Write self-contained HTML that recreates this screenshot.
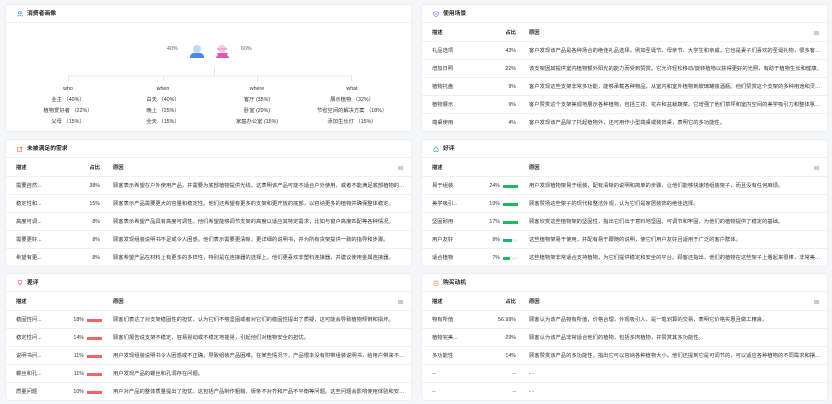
<!DOCTYPE html><html><head><meta charset="utf-8"><style>
*{margin:0;padding:0;box-sizing:border-box}
body{width:832px;height:404px;background:#f5f6f8;font-family:"Liberation Sans","Noto Sans CJK SC",sans-serif;color:#333;position:relative;overflow:hidden}
.p{position:absolute;background:#fff;border:1px solid #eceef2;border-radius:4px;overflow:hidden}
.h{height:18px;border-bottom:1px solid #eef0f3;font-size:5.8px;font-weight:bold;line-height:18px;padding-left:11px;display:flex;align-items:center;gap:4px;color:#222}
.ic{width:6px;height:6px;display:inline-block}
.r{position:absolute;left:0;right:0;height:18px;border-bottom:1px solid #f0f1f4;font-size:5.3px;line-height:18px;white-space:nowrap}
.r span{position:absolute}
.d{left:10px}.pc{right:311px;text-align:right}.rs{left:107px;width:294px;overflow:hidden;text-overflow:ellipsis}
.th{font-weight:bold;color:#222}
.b{position:absolute;left:81px;top:7.5px;width:15px;height:3px;background:#eaf7ef}
.b i{display:block;height:3px}
.g i{background:#1db863}.rd i{background:#f56464}
.tb{position:absolute;right:8px;top:7px;width:5px;height:4px;background:#ccc}
.c{position:absolute;font-size:5.3px;text-align:center;width:100px;line-height:11px}
</style></head><body>
<div class="p" style="left:5px;top:4px;width:407px;height:128px">
<div class="h"><svg class="ic" viewBox="0 0 10 10"><circle cx="4" cy="3" r="2" fill="none" stroke="#3a9bdc"/><path d="M1 9c0-3 6-3 6 0M7 1.5a2 2 0 0 1 0 3.5M8 6c1 .5 1.5 1.5 1.5 3" fill="none" stroke="#3a9bdc"/></svg>消费者画像</div>
<div style="position:absolute;left:161px;top:41px;font-size:5.3px;color:#666">40%</div>
<div style="position:absolute;left:235px;top:41px;font-size:5.3px;color:#666">60%</div>
<svg style="position:absolute;left:0;top:0" width="407" height="128">
<circle cx="191" cy="44" r="4" fill="#c3d6fb"/><path d="M184 53h14v-1a4 4 0 0 0-4-4h-6a4 4 0 0 0-4 4z" fill="#4a86f0"/>
<circle cx="216" cy="44" r="4" fill="#f8c8e7"/><path d="M211 43h10v2h-10z" fill="#f3a9d6"/><path d="M210 53h13v-1l-2-2 1-2h-11l1 2-2 2z" fill="#e058ac"/>
<path d="M208.5 62v9M62.5 76v-5h283v5M157.5 71v5M251.5 71v5" stroke="#e4e6ea" fill="none"/>
</svg>
<div class="c" style="left:12px;top:79px">who<br>业主 （40%）<br>植物爱好者 （22%）<br>父母 （15%）</div>
<div class="c" style="left:107px;top:79px">when<br>白天 （40%）<br>晚上 （25%）<br>全天 （15%）</div>
<div class="c" style="left:201px;top:79px">where<br>客厅 (35%)<br>卧室 (20%)<br>家庭办公室 (15%)</div>
<div class="c" style="left:296px;top:79px">what<br>展示植物 （32%）<br>节省空间的解决方案 （18%）<br>添加生长灯 （15%）</div>
</div>

<div class="p" style="left:421px;top:4px;width:407px;height:128px">
<div class="h"><svg class="ic" viewBox="0 0 10 10"><path d="M5 1l4 1.5v3C9 8 5 9.5 5 9.5S1 8 1 5.5v-3z" fill="none" stroke="#6b7cf0"/><circle cx="5" cy="5" r="1.3" fill="#6b7cf0"/></svg>使用场景</div>
<div class="r th" style="top:19px"><span class="d">描述</span><span class="pc">占比</span><span class="rs">原因</span><i class="tb"></i></div>
<div class="r" style="top:37px"><span class="d">礼品选项</span><span class="pc">43%</span><span class="rs">客户发现该产品是各种场合的绝佳礼品选择，例如圣诞节、母亲节、大学生和亲戚。它也是妻子们喜欢的圣诞礼物，很多客户表示会再次购买。</span></div>
<div class="r" style="top:55px"><span class="d">增加日照</span><span class="pc">22%</span><span class="rs">该支架因其提供室内植物额外阳光的能力而受到赞赏。它允许轻松移动/旋转植物以获得更好的光照，有助于植物生长和健康。</span></div>
<div class="r" style="top:73px"><span class="d">植物托盘</span><span class="pc">9%</span><span class="rs">客户发现这些支架非常多功能，能够承载各种物品，从室内和室外植物到玻璃罐装酒瓶。他们赞赏这个支架的多种用途和灵活性。</span></div>
<div class="r" style="top:91px"><span class="d">植物展示</span><span class="pc">9%</span><span class="rs">客户赞赏这个支架美观地展示各种植物，包括兰花、花卉和盆栽蔬菜。它增强了他们草坪和室内空间的美学吸引力和整体氛围。</span></div>
<div class="r" style="top:109px;border:0"><span class="d">端桌使用</span><span class="pc">4%</span><span class="rs">客户发现该产品除了托起植物外，还可用作小型端桌或装饰桌，表明它的多功能性。</span></div>
</div>

<div class="p" style="left:5px;top:139px;width:407px;height:128px">
<div class="h"><svg class="ic" viewBox="0 0 10 10"><rect x="1" y="2" width="7" height="7" fill="none" stroke="#f07030"/><path d="M4 6l5-5" stroke="#f07030"/></svg>未被满足的需求</div>
<div class="r th" style="top:19px"><span class="d">描述</span><span class="pc">占比</span><span class="rs">原因</span><i class="tb"></i></div>
<div class="r" style="top:37px"><span class="d">需要自然...</span><span class="pc">38%</span><span class="rs">顾客表示希望在户外使用产品，并需要为底部植物提供光线。这表明该产品可能不适合户外使用，或者不能满足底部植物的光照需求。</span></div>
<div class="r" style="top:55px"><span class="d">稳定性和...</span><span class="pc">15%</span><span class="rs">顾客表示产品需要更大的容量和稳定性。他们还希望有更多的支架和更开放的底部，以容纳更多的植物并确保整体稳定。</span></div>
<div class="r" style="top:73px"><span class="d">高度可调...</span><span class="pc">8%</span><span class="rs">顾客表示希望产品具有高度可调性。他们希望能够调节支架的高度以适应其特定需求，比如与窗户高度匹配等各种情况。</span></div>
<div class="r" style="top:91px"><span class="d">需要更好...</span><span class="pc">8%</span><span class="rs">顾客发现组装说明书不足或令人困惑。他们表示需要更清晰、更详细的说明书，并为所有货架提供一致的指导和步骤。</span></div>
<div class="r" style="top:109px;border:0"><span class="d">希望有更...</span><span class="pc">8%</span><span class="rs">顾客希望产品在材料上有更多的多样性，特别是在连接器的选择上。他们更喜欢非塑料连接器，并建议使用金属连接器。</span></div>
</div>

<div class="p" style="left:421px;top:139px;width:407px;height:128px">
<div class="h"><svg class="ic" viewBox="0 0 10 10"><path d="M1.5 9V5L5 1.5 8.5 5v4z" fill="none" stroke="#1db863"/></svg>好评</div>
<div class="r th" style="top:19px"><span class="d">描述</span><span class="rs">原因</span><i class="tb"></i></div>
<div class="r" style="top:37px"><span class="d">易于组装</span><span class="pc" style="right:327px">24%</span><i class="b g"><i style="width:15px"></i></i><span class="rs">用户发现植物架易于组装，配有清晰的说明和简单的步骤，让他们能够快速地组装架子，而且没有任何麻烦。</span></div>
<div class="r" style="top:55px"><span class="d">美学吸引...</span><span class="pc" style="right:327px">19%</span><i class="b g"><i style="width:15px"></i></i><span class="rs">顾客赞扬这些架子的现代和整洁外观，认为它们是家居装饰的绝佳选择。</span></div>
<div class="r" style="top:73px"><span class="d">坚固耐用</span><span class="pc" style="right:327px">17%</span><i class="b g"><i style="width:15px"></i></i><span class="rs">顾客欣赏这些植物架的坚固性，指出它们出于意料地坚固、可调节和牢固，为他们的植物提供了稳定的基础。</span></div>
<div class="r" style="top:91px"><span class="d">用户友好</span><span class="pc" style="right:327px">9%</span><i class="b g"><i style="width:9px"></i></i><span class="rs">这些植物架易于使用，并配有易于跟随的说明，使它们用户友好且适用于广泛的客户群体。</span></div>
<div class="r" style="top:109px;border:0"><span class="d">适合植物</span><span class="pc" style="right:327px">7%</span><i class="b g"><i style="width:7px"></i></i><span class="rs">这些植物架非常适合支持植物，为它们提供稳定和安全的平台。顾客还指出，他们的植物在这些架子上看起来很棒，非常美观。</span></div>
</div>

<div class="p" style="left:5px;top:273px;width:407px;height:128px">
<div class="h"><svg class="ic" viewBox="0 0 10 10"><path d="M2 1h6v5H6l-1 3-1-3H2z" fill="none" stroke="#f56464"/></svg>差评</div>
<div class="r th" style="top:19px"><span class="d">描述</span><span class="rs">原因</span><i class="tb"></i></div>
<div class="r" style="top:37px"><span class="d">稳固性问...</span><span class="pc" style="right:327px">18%</span><i class="b rd"><i style="width:15px"></i></i><span class="rs">顾客们表达了对支架稳固性的担忧，认为它们不够坚固或者对它们的稳固性提出了质疑，这可能会导致植物倾倒和损坏。</span></div>
<div class="r" style="top:55px"><span class="d">稳定性问...</span><span class="pc" style="right:327px">14%</span><i class="b rd"><i style="width:15px"></i></i><span class="rs">顾客们报告说支架不稳定，容易晃动或不稳定地摇晃，引起他们对植物安全的担忧。</span></div>
<div class="r" style="top:73px"><span class="d">说明书问...</span><span class="pc" style="right:327px">11%</span><i class="b rd"><i style="width:15px"></i></i><span class="rs">用户发现组装说明书令人困惑或不正确，导致组装产品困难。在某些情况下，产品根本没有附带组装说明书，给用户带来不便。</span></div>
<div class="r" style="top:91px"><span class="d">螺丝和孔...</span><span class="pc" style="right:327px">11%</span><i class="b rd"><i style="width:15px"></i></i><span class="rs">用户发现产品的螺丝和孔洞存在问题。</span></div>
<div class="r" style="top:109px;border:0"><span class="d">质量问题</span><span class="pc" style="right:327px">10%</span><i class="b rd"><i style="width:15px"></i></i><span class="rs">用户对产品的整体质量提出了担忧。这包括产品制作粗糙、板条不对齐和产品不平衡等问题。这些问题会影响使用体验和安全。</span></div>
</div>

<div class="p" style="left:421px;top:273px;width:407px;height:128px">
<div class="h"><svg class="ic" viewBox="0 0 10 10"><rect x="1.5" y="2" width="7" height="7" rx="1" fill="none" stroke="#f08a30"/><path d="M3.5 1v2M6.5 1v2M3 5.5h4" stroke="#f08a30"/></svg>购买动机</div>
<div class="r th" style="top:19px"><span class="d">描述</span><span class="pc">占比</span><span class="rs">原因</span><i class="tb"></i></div>
<div class="r" style="top:37px"><span class="d">物有所值</span><span class="pc">56.99%</span><span class="rs">顾客认为该产品物有所值，价格合理，外观吸引人，是一笔划算的交易，表明它价格实惠且做工精良。</span></div>
<div class="r" style="top:55px"><span class="d">植物完美...</span><span class="pc">29%</span><span class="rs">顾客认为该产品非常适合他们的植物，包括多肉植物，并赞赏其多功能性。</span></div>
<div class="r" style="top:73px"><span class="d">多功能性</span><span class="pc">14%</span><span class="rs">顾客赞赏该产品的多功能性，指出它可以容纳各种植物大小。他们还提到它是可调节的，可以适应各种植物的不同需求和摆放。</span></div>
<div class="r" style="top:91px"><span class="d">--</span><span class="pc">--</span><span class="rs">- -</span></div>
<div class="r" style="top:109px;border:0"><span class="d">--</span><span class="pc">--</span><span class="rs">- -</span></div>
</div>
</body></html>
